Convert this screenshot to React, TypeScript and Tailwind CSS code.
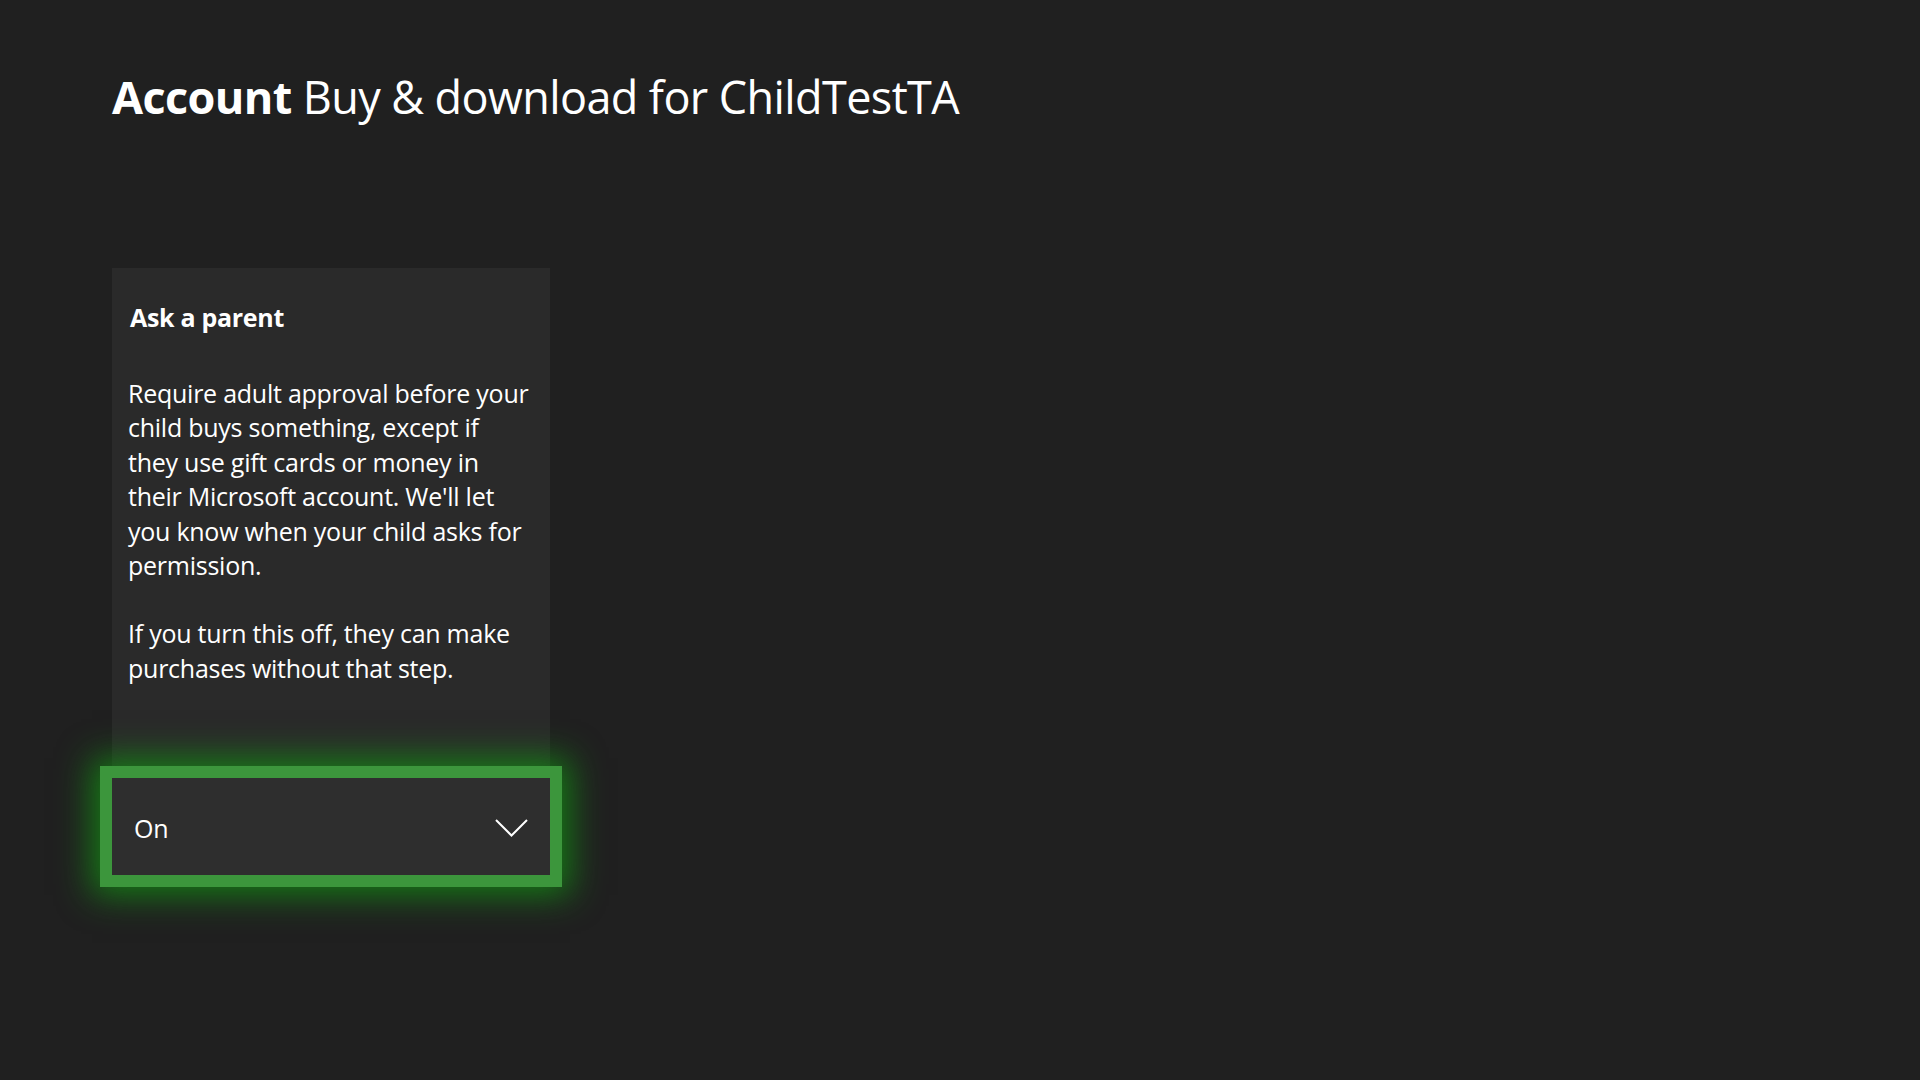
import React from "react";

export default function App() {
  const font = { fontFamily: '"Open Sans", "Noto Sans", sans-serif' };
  return (
    <div className="w-[1920px] h-[1080px] bg-[#202020] text-white overflow-hidden pl-[112px] pt-[65px]" style={font}>
      <h1 className="text-[45px] leading-[64px] m-0 whitespace-nowrap tracking-[-0.6px]">
        <span className="font-bold">Account</span>
        <span className="font-normal"> Buy &amp; download for ChildTestTA</span>
      </h1>
      <div className="mt-[139px] w-[438px] flex flex-col">
        <div className="bg-[#2a2a2a] h-[498px] pt-[32px] pl-[18px] pr-[6px]">
          <div className="text-[25px] leading-[34px] font-bold tracking-[-0.3px]">Ask a parent</div>
          <div className="mt-[42px] -ml-[2px] text-[25px] leading-[34.4px] tracking-[-0.25px] whitespace-nowrap">
            <p>
              Require adult approval before your
              <br />
              child buys something, except if
              <br />
              they use gift cards or money in
              <br />
              their Microsoft account. We'll let
              <br />
              you know when your child asks for
              <br />
              permission.
            </p>
            <p className="mt-[34px]">
              If you turn this off, they can make
              <br />
              purchases without that step.
            </p>
          </div>
        </div>
        <div className="-ml-[12px] w-[462px] h-[121px] border-[12px] border-[#3c963c] bg-[#2e2e2e] shadow-[0_0_32px_8px_rgba(20,140,20,0.85)] flex items-center justify-between pl-[22px] pr-[22px] pt-[4px] relative">
          <span className="text-[25px] tracking-[-0.25px]">On</span>
          <svg width="33" height="18" viewBox="0 0 33 18" fill="none" className="-mt-[1px]">
            <path d="M1 1 L16.5 16.5 L32 1" stroke="white" strokeWidth="2" />
          </svg>
        </div>
      </div>
    </div>
  );
}
